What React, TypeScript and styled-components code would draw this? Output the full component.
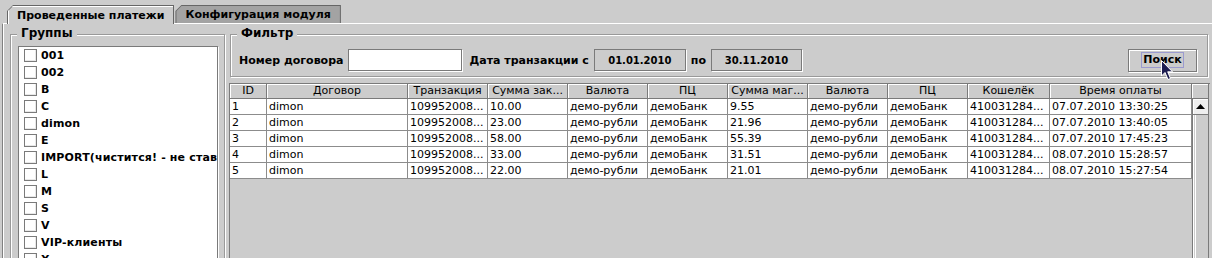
import React from "react";
import styled, { createGlobalStyle } from "styled-components";

const Global = createGlobalStyle`
  html, body { margin: 0; padding: 0; background: #cccccc; }
  body { font-family: "DejaVu Sans", Verdana, sans-serif; overflow: hidden; }
  * { box-sizing: border-box; }
`;

const Window = styled.div`
  position: relative;
  width: 1212px;
  height: 258px;
  overflow: hidden;
  background: #cccccc;
  padding-top: 5px;
`;

const TabStrip = styled.div`
  display: flex;
  height: 18px;
  padding-left: 7px;
  position: relative;
  z-index: 1;
`;

const TabOuter = styled.div<{ $active?: boolean }>`
  height: ${(p) => (p.$active ? 19 : 18)}px;
  background: #666666;
  clip-path: polygon(6px 0, 100% 0, 100% 100%, 0 100%, 0 6px);
  padding: 1px 1px 0 1px;
  margin-right: 1px;
`;

const TabFace = styled.div<{ $active?: boolean }>`
  height: 100%;
  padding: 0 9px 0 9px;
  display: flex;
  align-items: center;
  clip-path: polygon(5px 0, 100% 0, 100% 100%, 0 100%, 0 5px);
  background: ${(p) => (p.$active ? "#cccccc" : "#a3a3a3")};
  box-shadow: ${(p) => (p.$active ? "inset 1px 1px 0 #ffffff" : "none")};
  font-weight: bold;
  font-size: 11px;
  color: #000;
  white-space: nowrap;
`;

const Panel = styled.div`
  height: 240px;
  margin-left: 2px;
  border-left: 1px solid #808080;
  border-top: 1px solid #ffffff;
  box-shadow: inset 1px 0 0 #ffffff;
  display: flex;
  gap: 4px;
  padding: 10px 0 0 7px;
`;

const Titled = styled.div<{ $w: number }>`
  position: relative;
  width: ${(p) => p.$w}px;
  border: 1px solid #999999;
  box-shadow: inset 1px 1px 0 #ffffff, 1px 1px 0 #ffffff;
`;

const Title = styled.div`
  position: absolute;
  top: -9px;
  left: 6px;
  padding: 0 4px;
  background: #cccccc;
  font-size: 12px;
  font-weight: bold;
  line-height: 15px;
  color: #000;
`;

const GroupsBox = styled(Titled)`
  height: 260px;
  padding: 11px 6px 0 7px;
`;

const List = styled.div`
  height: 240px;
  background: #ffffff;
  border: 1px solid #7a7a7a;
  box-shadow: 1px 1px 0 #ffffff;
  overflow: hidden;
`;

const ListItem = styled.div`
  display: flex;
  align-items: center;
  height: 17px;
  padding-left: 5px;
  gap: 4px;
  font-size: 11px;
  letter-spacing: 0.15px;
  font-weight: bold;
  white-space: nowrap;
  color: #000;
`;

const Check = styled.span`
  flex: none;
  width: 13px;
  height: 13px;
  border: 1px solid #7a7a7a;
  background: #ffffff;
  box-shadow: inset -1px -1px 0 #e8e8e8;
`;

const RightCol = styled.div`
  display: flex;
  flex-direction: column;
  gap: 6px;
  width: 980px;
`;

const FilterBox = styled(Titled)`
  height: 43px;
  margin-left: 1px;
  display: flex;
  align-items: center;
  padding: 9px 9px 0 8px;
`;

const Label = styled.span<{ $ml?: number }>`
  font-size: 11px;
  font-weight: bold;
  color: #000;
  margin-left: ${(p) => p.$ml ?? 0}px;
  white-space: nowrap;
`;

const TextField = styled.div<{ $w: number; $ml?: number; $gray?: boolean }>`
  width: ${(p) => p.$w}px;
  height: 22px;
  margin-left: ${(p) => p.$ml ?? 0}px;
  background: ${(p) => (p.$gray ? "#cccccc" : "#ffffff")};
  border: 1px solid #7a7a7a;
  box-shadow: 1px 1px 0 #ffffff;
  display: flex;
  align-items: center;
  justify-content: center;
  font-size: 10px;
  font-weight: bold;
  color: #000;
`;

const Spacer = styled.div`
  flex: 1;
`;

const Button = styled.div`
  width: 69px;
  height: 23px;
  border: 1px solid #7a7a7a;
  box-shadow: inset 1px 1px 0 #ffffff, 1px 1px 0 #ffffff;
  background: #cccccc;
  display: flex;
  align-items: center;
  justify-content: center;
  margin-right: 1px;
`;

const Focus = styled.span`
  position: relative;
  border: 1px solid #9a9ad0;
  padding: 1px 1px 1px 1px;
  font-size: 11px;
  font-weight: bold;
  line-height: 12px;
  color: #000;
`;

const Cursor = styled.svg`
  position: absolute;
  left: 19px;
  top: 7px;
  overflow: visible;
`;

const ScrollPane = styled.div`
  display: flex;
  height: 180px;
  border-top: 1px solid #7a7a7a;
  border-left: 1px solid #7a7a7a;
  width: 981px;
`;

const TableArea = styled.div`
  width: 962px;
  display: flex;
  flex-direction: column;
`;

const Row = styled.div<{ $head?: boolean }>`
  display: grid;
  grid-template-columns: 37px 141px 80px 80px 80px 80px 80px 80px 80px 82px 142px;
  height: ${(p) => (p.$head ? 15 : 16)}px;
  background: ${(p) => (p.$head ? "#cccccc" : "#ffffff")};
`;

const HeadCell = styled.div`
  border-right: 1px solid #7a7a7a;
  border-bottom: 1px solid #7a7a7a;
  box-shadow: inset 1px 1px 0 #ffffff;
  font-size: 11px;
  line-height: 14px;
  text-align: center;
  white-space: nowrap;
  overflow: hidden;
  color: #000;
`;

const Cell = styled.div`
  border-right: 1px solid #8c8c8c;
  border-bottom: 1px solid #8c8c8c;
  font-size: 11px;
  line-height: 15px;
  padding-left: 2px;
  white-space: nowrap;
  overflow: hidden;
  color: #000;
`;

const ScrollCol = styled.div`
  width: 17px;
  display: flex;
  flex-direction: column;
`;

const Corner = styled.div`
  height: 15px;
  border-bottom: 1px solid #7a7a7a;
  border-right: 1px solid #7a7a7a;
  box-shadow: inset 1px 1px 0 #ffffff;
`;

const ScrollBar = styled.div`
  flex: 1;
  border-left: 1px solid #7a7a7a;
  border-right: 1px solid #7a7a7a;
  box-shadow: inset 1px 0 0 #ffffff;
  display: flex;
  flex-direction: column;
  background: #cccccc;
`;

const ArrowBtn = styled.div`
  height: 16px;
  border-bottom: 1px solid #7a7a7a;
  background: #eeeeee;
  box-shadow: inset 1px 1px 0 #ffffff;
  display: flex;
  align-items: center;
  justify-content: center;
`;

const Track = styled.div`
  flex: 1;
  margin-left: 2px;
  border-left: 1px solid #ffffff;
`;

const groups = [
  "001",
  "002",
  "B",
  "C",
  "dimon",
  "E",
  "IMPORT(чистится! - не ставить)",
  "L",
  "M",
  "S",
  "V",
  "VIP-клиенты",
  "X",
];

const headers = [
  "ID",
  "Договор",
  "Транзакция",
  "Сумма зак...",
  "Валюта",
  "ПЦ",
  "Сумма маг...",
  "Валюта",
  "ПЦ",
  "Кошелёк",
  "Время оплаты",
];

const rows = [
  ["1", "dimon", "109952008...", "10.00", "демо-рубли", "демоБанк", "9.55", "демо-рубли", "демоБанк", "410031284...", "07.07.2010 13:30:25"],
  ["2", "dimon", "109952008...", "23.00", "демо-рубли", "демоБанк", "21.96", "демо-рубли", "демоБанк", "410031284...", "07.07.2010 13:40:05"],
  ["3", "dimon", "109952008...", "58.00", "демо-рубли", "демоБанк", "55.39", "демо-рубли", "демоБанк", "410031284...", "07.07.2010 17:45:23"],
  ["4", "dimon", "109952008...", "33.00", "демо-рубли", "демоБанк", "31.51", "демо-рубли", "демоБанк", "410031284...", "08.07.2010 15:28:57"],
  ["5", "dimon", "109952008...", "22.00", "демо-рубли", "демоБанк", "21.01", "демо-рубли", "демоБанк", "410031284...", "08.07.2010 15:27:54"],
];

export default function App() {
  return (
    <Window>
      <Global />
      <TabStrip>
        <TabOuter $active>
          <TabFace $active>Проведенные платежи</TabFace>
        </TabOuter>
        <TabOuter>
          <TabFace>Конфигурация модуля</TabFace>
        </TabOuter>
      </TabStrip>
      <Panel>
        <GroupsBox $w={215}>
          <Title>Группы</Title>
          <List>
            {groups.map((g) => (
              <ListItem key={g}>
                <Check />
                {g}
              </ListItem>
            ))}
          </List>
        </GroupsBox>
        <RightCol>
          <FilterBox $w={978}>
            <Title>Фильтр</Title>
            <Label>Номер договора</Label>
            <TextField $w={114} $ml={5} />
            <Label $ml={7}>Дата транзакции с</Label>
            <TextField $w={92} $ml={5} $gray>
              01.01.2010
            </TextField>
            <Label $ml={5}>по</Label>
            <TextField $w={91} $ml={5} $gray>
              30.11.2010
            </TextField>
            <Spacer />
            <Button>
              <Focus>
                Поиск
                <Cursor width="13" height="21" viewBox="0 0 13 21">
                  <path
                    d="M0.5 0.5 L0.5 16 L4 12.5 L7 19.5 L9.5 18.5 L6.7 11.8 L11.5 11.8 Z"
                    fill="#1c1c50"
                    stroke="#ffffff"
                    strokeWidth="1"
                  />
                </Cursor>
              </Focus>
            </Button>
          </FilterBox>
          <ScrollPane>
            <TableArea>
              <Row $head>
                {headers.map((h, i) => (
                  <HeadCell key={i}>{h}</HeadCell>
                ))}
              </Row>
              {rows.map((r) => (
                <Row key={r[0]}>
                  {r.map((c, i) => (
                    <Cell key={i}>{c}</Cell>
                  ))}
                </Row>
              ))}
            </TableArea>
            <ScrollCol>
              <Corner />
              <ScrollBar>
                <ArrowBtn>
                  <svg width="9" height="5" viewBox="0 0 9 5">
                    <path d="M0 5 L4.5 0 L9 5 Z" fill="#000" />
                  </svg>
                </ArrowBtn>
                <Track />
              </ScrollBar>
            </ScrollCol>
          </ScrollPane>
        </RightCol>
      </Panel>
    </Window>
  );
}
